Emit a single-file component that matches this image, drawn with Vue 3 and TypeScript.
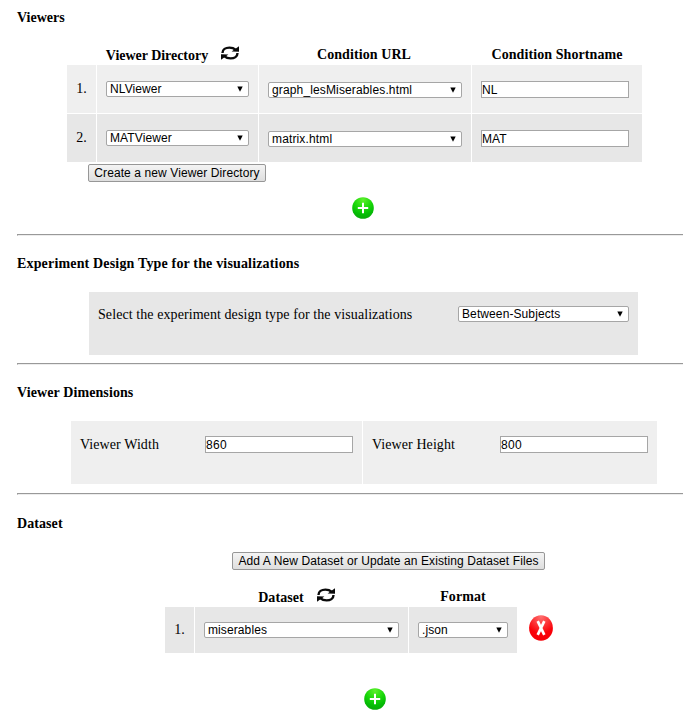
<script setup lang="ts">
import { ref } from 'vue'

interface Viewer {
  directory: string
  url: string
  shortname: string
}

const viewers = ref<Viewer[]>([
  { directory: 'NLViewer', url: 'graph_lesMiserables.html', shortname: 'NL' },
  { directory: 'MATViewer', url: 'matrix.html', shortname: 'MAT' },
])
const directories = ['NLViewer', 'MATViewer']
const urls = ['graph_lesMiserables.html', 'matrix.html']
const design = ref('Between-Subjects')
const viewerWidth = ref('860')
const viewerHeight = ref('800')
const dataset = ref('miserables')
const format = ref('.json')
</script>

<template>
  <svg class="defs" aria-hidden="true">
    <defs>
      <radialGradient id="green" cx="50%" cy="12%" r="90%">
        <stop offset="0" stop-color="#5cf02c" />
        <stop offset="0.45" stop-color="#1bd80a" />
        <stop offset="0.75" stop-color="#05bd05" />
        <stop offset="1" stop-color="#0aa80a" />
      </radialGradient>
      <radialGradient id="red" cx="50%" cy="5%" r="95%">
        <stop offset="0" stop-color="#ff7070" />
        <stop offset="0.5" stop-color="#fb2226" />
        <stop offset="0.7" stop-color="#fa0008" />
        <stop offset="1" stop-color="#f50008" />
      </radialGradient>
      <symbol id="refresh" viewBox="0 0 18 14">
        <path d="M1.5 7C1.5 3.4 4.6 1.6 8.4 1.6c2.6 0 4.6.6 6 2M16.5 7c0 3.6-3.1 5.4-6.9 5.4-2.6 0-4.6-.6-6-2" fill="none" stroke="#0a0a0a" stroke-width="2.4" />
        <path d="M18 .2v5.6l-7.4-.3zM0 13.8V8.2l7.4.3z" fill="#0a0a0a" />
      </symbol>
      <symbol id="plus" viewBox="0 0 22 22">
        <circle cx="11" cy="11" r="10.8" fill="url(#green)" />
        <path d="M11 5.8v10.4M5.8 11h10.4" stroke="#fff" stroke-width="2" />
      </symbol>
    </defs>
  </svg>

  <main class="page">
    <section class="viewers">
      <h4>Viewers</h4>
      <div class="grid viewer-grid head">
        <span></span>
        <span class="with-icon"><b class="dir">Viewer Directory</b><svg class="refresh"><use href="#refresh" /></svg></span>
        <b class="url">Condition URL</b>
        <b class="short">Condition Shortname</b>
      </div>
      <div v-for="(v, i) in viewers" :key="i" class="grid viewer-grid row" :class="{ dark: i % 2 === 1 }">
        <div class="cell num">{{ i + 1 }}.</div>
        <div class="cell"><span class="select"><select v-model="v.directory"><option v-for="d in directories" :key="d">{{ d }}</option></select><svg class="arrow" viewBox="0 0 6 6"><path d="M.3 .5h5.4L3 5.8z" /></svg></span></div>
        <div class="cell low"><span class="select"><select v-model="v.url"><option v-for="u in urls" :key="u">{{ u }}</option></select><svg class="arrow" viewBox="0 0 6 6"><path d="M.3 .5h5.4L3 5.8z" /></svg></span></div>
        <div class="cell"><input v-model="v.shortname" type="text" /></div>
      </div>
      <button class="create">Create a new Viewer Directory</button>
      <svg class="add"><use href="#plus" /></svg>
    </section>

    <hr />
    <section class="design">
      <h4 class="long">Experiment Design Type for the visualizations</h4>
      <div class="panel dark">
        <label class="sentence">Select the experiment design type for the visualizations</label>
        <span class="select"><select v-model="design"><option>Between-Subjects</option><option>Within-Subjects</option></select><svg class="arrow" viewBox="0 0 6 6"><path d="M.3 .5h5.4L3 5.8z" /></svg></span>
      </div>
    </section>

    <hr />
    <section class="dimensions">
      <h4 class="dim">Viewer Dimensions</h4>
      <div class="grid dim-grid">
        <div class="panel"><label>Viewer Width</label><input v-model="viewerWidth" type="text" /></div>
        <div class="panel"><label>Viewer Height</label><input v-model="viewerHeight" type="text" /></div>
      </div>
    </section>

    <hr />
    <section class="dataset">
      <h4>Dataset</h4>
      <button class="upload">Add A New Dataset or Update an Existing Dataset Files</button>
      <div class="grid data-grid head">
        <span></span>
        <span class="with-icon"><b>Dataset</b><svg class="refresh"><use href="#refresh" /></svg></span>
        <b class="format">Format</b>
      </div>
      <div class="data-line">
        <div class="grid data-grid row dark">
          <div class="cell num">1.</div>
          <div class="cell"><span class="select"><select v-model="dataset"><option>miserables</option></select><svg class="arrow" viewBox="0 0 6 6"><path d="M.3 .5h5.4L3 5.8z" /></svg></span></div>
          <div class="cell"><span class="select"><select v-model="format"><option>.json</option></select><svg class="arrow" viewBox="0 0 6 6"><path d="M.3 .5h5.4L3 5.8z" /></svg></span></div>
        </div>
        <svg class="remove" viewBox="0 0 24 26">
          <ellipse cx="12" cy="13" rx="11.9" ry="12.8" fill="url(#red)" />
          <path d="M8.7 6.2l6.6 13.6M15.3 6.2L8.7 19.8" stroke="#fff" stroke-width="2.7" />
        </svg>
      </div>
      <svg class="add"><use href="#plus" /></svg>
    </section>
  </main>
</template>

<style>
body {
  background: #fff;
  overflow: hidden;
}
</style>

<style scoped>
* {
  box-sizing: border-box;
}
.defs {
  display: block;
  width: 0;
  height: 0;
}
.page {
  height: 713px;
  overflow: hidden;
  padding-left: 17px;
  color: #000;
  font: 14px/16px "Liberation Serif", "Times New Roman", serif;
  letter-spacing: 0.08px;
}
section {
  display: flex;
  flex-direction: column;
  align-items: flex-start;
}
.viewers { height: 234px; padding-top: 10px; }
.design, .dimensions { padding-top: 20px; }
.design { height: 127px; }
.dimensions { height: 128px; }
.dataset { padding-top: 21px; }
hr {
  height: 2px;
  margin: 0;
  border: 0;
  border-top: 1px solid #999;
  border-bottom: 1px solid #ededed;
  border-left: 1px solid #999;
}
h4 {
  margin: 0;
  font-size: 14px;
  line-height: 16px;
}
.viewers h4 { letter-spacing: 0; }
.long { letter-spacing: 0.165px; }
.dim { letter-spacing: 0.1px; }
.grid {
  display: grid;
  column-gap: 1px;
}
.viewer-grid { grid-template-columns: 29px 161px 212px 170px; margin-left: 50px; }
.data-grid { grid-template-columns: 29px 213px 108px; }
.head {
  height: 21px;
  text-align: center;
}
.viewers .head {
  margin-top: 18px;
}
.viewers .head > b { padding-top: 3px; }
.viewers .head > .url { padding-right: 2px; }
.dir { letter-spacing: -0.03px; }
.with-icon {
  display: flex;
  justify-content: center;
  gap: 13px;
  padding: 4px 10px 0 0;
}
.refresh {
  width: 18px;
  height: 14px;
  margin-top: -2px;
}
.row { height: 48px; }
.row + .row { margin-top: 1px; }
.cell {
  padding: 16px 9px 0;
  background: #efefef;
}
.dark .cell, .panel.dark { background: #e7e7e7; }
.cell.low { padding-top: 17px; }
.cell.num {
  padding: 16px 0 0;
  text-align: center;
}
.viewer-grid .cell:last-child { padding-right: 13px; }
.select {
  position: relative;
  display: block;
  height: 16px;
}
select, input, button {
  display: block;
  margin: 0;
  color: #000;
  font: 12px/14px "Liberation Sans", Arial, sans-serif;
  letter-spacing: 0.1px;
}
select {
  width: 100%;
  height: 16px;
  padding: 0 3px;
  border: 1px solid #a6a6a6;
  border-radius: 2px;
  appearance: none;
  background: #fff;
}
.low select { letter-spacing: 0.14px; }
.arrow {
  position: absolute;
  top: 5px;
  right: 6px;
  width: 6px;
  height: 6px;
}
input {
  width: 148px;
  height: 17px;
  padding: 0;
  border: 1px solid #a6a6a6;
  border-radius: 0;
  background: #fff;
}
.dimensions input { letter-spacing: 0.3px; }
button {
  height: 18px;
  padding: 0;
  border: 1px solid #979797;
  border-radius: 2px;
  background: linear-gradient(#f4f4f4, #dedede);
  line-height: 15px;
  white-space: nowrap;
}
.create { width: 178px; margin: 2px 0 0 71px; }
.upload { width: 313px; margin: 20px 0 0 215px; }
.add { width: 22px; height: 22px; }
.viewers .add { margin: 15px 0 0 335px; }
.panel {
  display: flex;
  justify-content: space-between;
  height: 63px;
  padding: 15px 9px 0;
  background: #efefef;
}
.design .panel {
  width: 549px;
  margin: 20px 0 0 72px;
  padding-top: 14px;
}
.design .select { width: 171px; }
.design label, .dimensions label { padding-top: 1px; }
.dim-grid {
  grid-template-columns: 291px 294px;
  margin: 20px 0 0 54px;
}
.dataset .head {
  margin: 17px 0 0 148px;
  height: 20px;
}
.dataset .with-icon { padding-top: 3px; }
.format { padding-top: 2px; }
.data-line {
  display: flex;
  margin-left: 148px;
}
.dataset .row { height: 46px; }
.dataset .cell { padding-top: 15px; }
.remove {
  width: 24px;
  height: 26px;
  margin: 8px 0 0 12px;
}
.dataset .add { margin: 35px 0 0 347px; }
</style>
